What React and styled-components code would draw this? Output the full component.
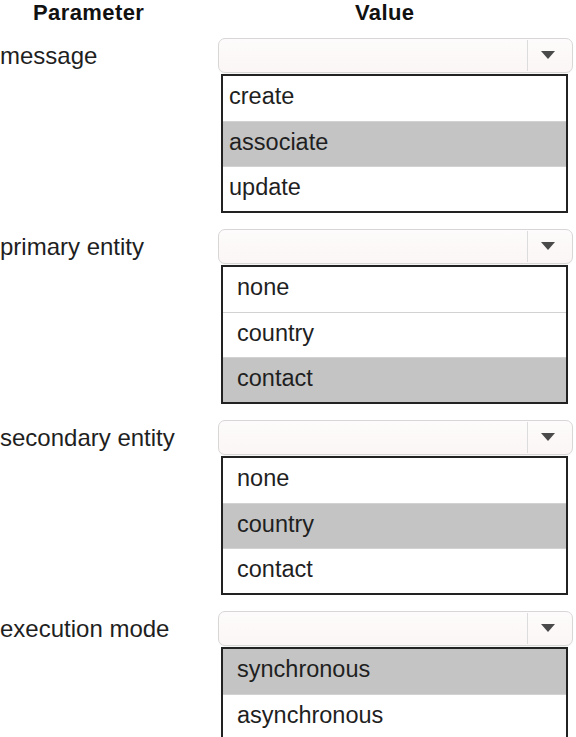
import React from "react";
import styled, { createGlobalStyle } from "styled-components";

const GlobalStyle = createGlobalStyle`
  html, body {
    margin: 0;
    padding: 0;
    background: #ffffff;
  }
  body {
    font-family: "Liberation Sans", Arial, sans-serif;
    color: #1f1f1f;
  }
`;

const sections = [
  { label: "message", inset: 6, options: ["create", "associate", "update"], selected: 1 },
  { label: "primary entity", inset: 14, options: ["none", "country", "contact"], selected: 2 },
  { label: "secondary entity", inset: 14, options: ["none", "country", "contact"], selected: 1 },
  { label: "execution mode", inset: 14, options: ["synchronous", "asynchronous"], selected: 0 },
];

const Table = styled.div`
  display: grid;
  grid-template-columns: 218px 355px;
  row-gap: 16px;
  width: 576px;
  height: 737px;
  overflow: hidden;
`;

const HeaderCell = styled.div`
  font-weight: bold;
  font-size: 22px;
  line-height: 25px;
  height: 25px;
  margin-bottom: -3px;
  padding-left: ${(p) => p.$indent}px;
  letter-spacing: 0.4px;
  color: #111;
`;

const Label = styled.div`
  font-size: 24px;
  line-height: 35px;
  white-space: nowrap;
`;

const ValueCell = styled.div`
  display: flex;
  flex-direction: column;
`;

const Select = styled.div`
  display: flex;
  height: 35px;
  box-sizing: border-box;
  border: 1px solid #d9d6d6;
  border-radius: 7px;
  background: linear-gradient(#fdfbfb, #fcf6f6);
  box-shadow: 0 1px 1px rgba(0, 0, 0, 0.04);
`;

const SelectField = styled.div`
  flex: 1;
`;

const ArrowBox = styled.div`
  width: 40px;
  border-left: 1px solid #dcdcdc;
  display: flex;
  align-items: center;
  justify-content: center;
  padding-right: 4px;
  margin: 1px 0;
`;

const List = styled.div`
  margin: 1px 5px 0 3px;
  border: 2px solid #222;
  background: #fff;
`;

const Option = styled.div`
  height: 45px;
  box-sizing: border-box;
  padding: 0 0 5px ${(p) => p.$inset}px;
  font-size: 23.5px;
  line-height: 40px;
  background: ${(p) => (p.$selected ? "#c4c4c4" : "#ffffff")};
  & + & {
    border-top: 1px solid #d2d2d2;
  }
`;

const Arrow = () => (
  <svg width="14" height="9" viewBox="0 0 14 9">
    <path d="M0 0 L14 0 L7 8 Z" fill="#4a4a4a" />
  </svg>
);

export default function App() {
  return (
    <>
      <GlobalStyle />
      <Table>
        <HeaderCell $indent={33}>Parameter</HeaderCell>
        <HeaderCell $indent={137}>Value</HeaderCell>
        {sections.map((s) => (
          <React.Fragment key={s.label}>
            <Label>{s.label}</Label>
            <ValueCell>
              <Select>
                <SelectField />
                <ArrowBox>
                  <Arrow />
                </ArrowBox>
              </Select>
              <List>
                {s.options.map((o, i) => (
                  <Option key={o} $inset={s.inset} $selected={i === s.selected}>
                    {o}
                  </Option>
                ))}
              </List>
            </ValueCell>
          </React.Fragment>
        ))}
      </Table>
    </>
  );
}
